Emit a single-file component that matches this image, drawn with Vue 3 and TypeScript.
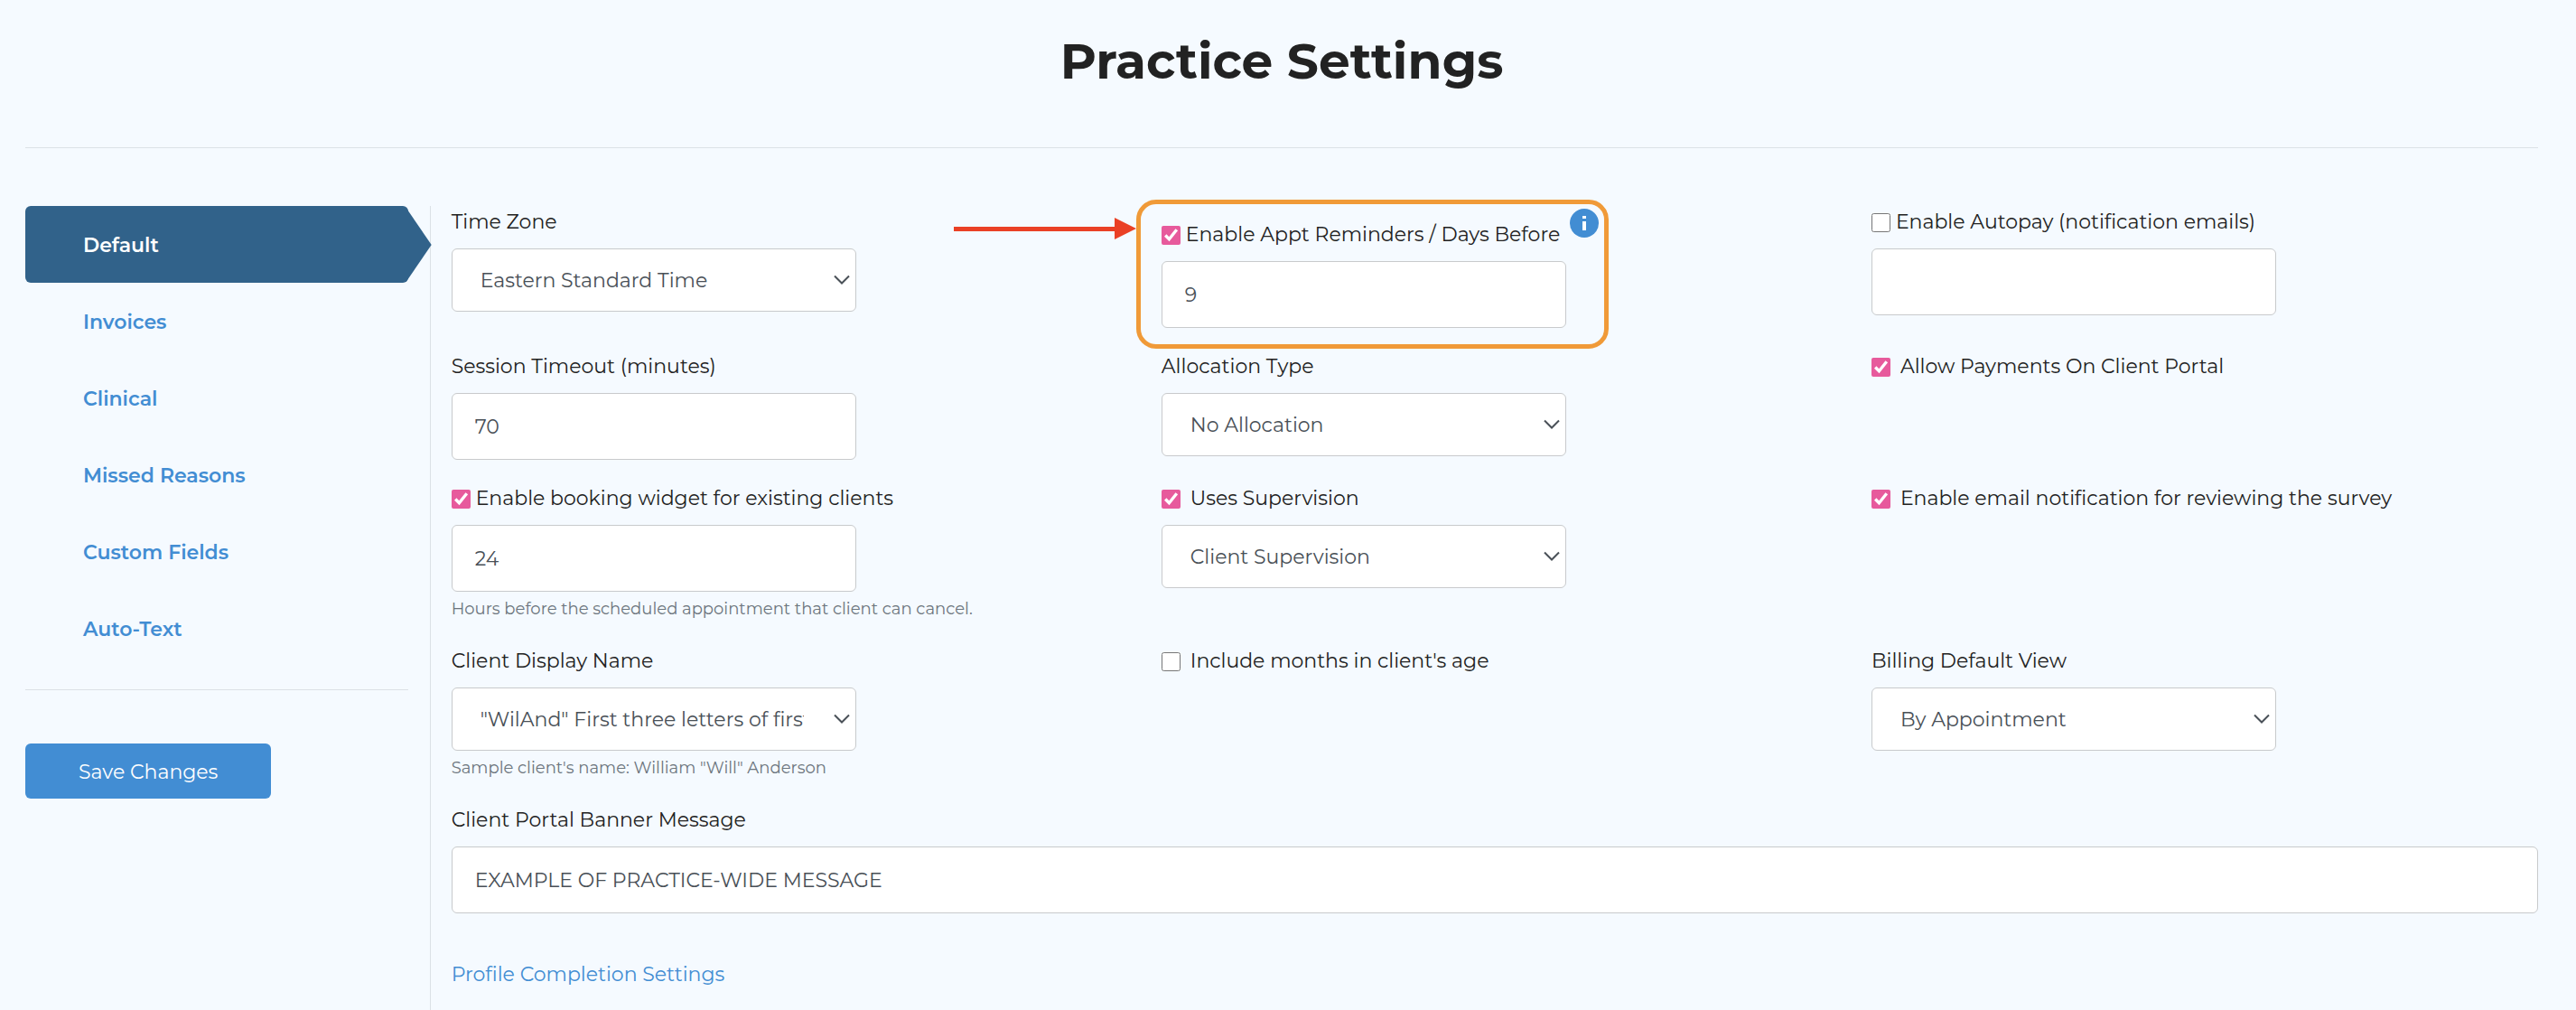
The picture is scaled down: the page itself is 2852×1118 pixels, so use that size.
<script setup lang="ts">
import { reactive, ref } from 'vue'

const tabs: string[] = ['Default', 'Invoices', 'Clinical', 'Missed Reasons', 'Custom Fields', 'Auto-Text']
const activeTab = ref<string>('Default')

const form = reactive({
  timeZone: 'Eastern Standard Time',
  reminders: true,
  reminderDays: '9',
  autopay: false,
  autopayEmails: '',
  timeout: '70',
  allocation: 'No Allocation',
  portalPayments: true,
  booking: true,
  bookingHours: '24',
  supervision: true,
  supervisionType: 'Client Supervision',
  surveyEmails: true,
  displayName: '"WilAnd" First three letters of first and last name',
  ageMonths: false,
  billingView: 'By Appointment',
  banner: 'EXAMPLE OF PRACTICE-WIDE MESSAGE',
})
</script>

<template>
  <div class="page">
    <header class="page-header">
      <h1>Practice Settings</h1>
    </header>

    <div class="layout">
      <aside class="sidebar">
        <nav class="tabs">
          <a
            v-for="tab in tabs"
            :key="tab"
            href="#"
            class="tab"
            :class="{ active: tab === activeTab }"
            @click.prevent="activeTab = tab"
          >{{ tab }}</a>
        </nav>
        <hr class="rule" />
        <button type="button" class="save">Save Changes</button>
      </aside>

      <main class="settings">
        <div class="row">
          <div class="field">
            <label class="label" for="time-zone">Time Zone</label>
            <select id="time-zone" v-model="form.timeZone" class="control select">
              <option>Eastern Standard Time</option>
            </select>
          </div>

          <div class="field highlighted">
            <div class="check tight">
              <input id="reminders" v-model="form.reminders" type="checkbox" />
              <label class="label" for="reminders">Enable Appt Reminders / Days Before</label>
            </div>
            <input v-model="form.reminderDays" type="text" class="control text" aria-label="Days before" />
            <button type="button" class="info" aria-label="About reminders">
              <svg viewBox="0 0 32 32" width="32" height="32">
                <circle cx="16" cy="16" r="16" fill="#428dd3" />
                <rect x="14" y="8" width="4" height="3" fill="#fff" />
                <rect x="14" y="14" width="4" height="10" fill="#fff" />
              </svg>
            </button>
            <span class="outline"></span>
            <svg class="arrow" viewBox="0 0 202 24" width="202" height="24">
              <path d="M0 10H178V0L202 12L178 24V15H0Z" fill="#ea4025" />
            </svg>
          </div>

          <div class="field">
            <div class="check tight">
              <input id="autopay" v-model="form.autopay" type="checkbox" />
              <label class="label" for="autopay">Enable Autopay (notification emails)</label>
            </div>
            <input v-model="form.autopayEmails" type="text" class="control text" aria-label="Notification emails" />
          </div>
        </div>

        <div class="row">
          <div class="field">
            <label class="label" for="timeout">Session Timeout (minutes)</label>
            <input id="timeout" v-model="form.timeout" type="text" class="control text" />
          </div>
          <div class="field">
            <label class="label" for="allocation">Allocation Type</label>
            <select id="allocation" v-model="form.allocation" class="control select">
              <option>No Allocation</option>
            </select>
          </div>
          <div class="field">
            <div class="check">
              <input id="payments" v-model="form.portalPayments" type="checkbox" />
              <label class="label" for="payments">Allow Payments On Client Portal</label>
            </div>
          </div>
        </div>

        <div class="row">
          <div class="field">
            <div class="check tight">
              <input id="booking" v-model="form.booking" type="checkbox" />
              <label class="label" for="booking">Enable booking widget for existing clients</label>
            </div>
            <input v-model="form.bookingHours" type="text" class="control text" aria-label="Hours before" />
            <small class="help">Hours before the scheduled appointment that client can cancel.</small>
          </div>
          <div class="field">
            <div class="check">
              <input id="supervision" v-model="form.supervision" type="checkbox" />
              <label class="label" for="supervision">Uses Supervision</label>
            </div>
            <select v-model="form.supervisionType" class="control select" aria-label="Supervision type">
              <option>Client Supervision</option>
            </select>
          </div>
          <div class="field">
            <div class="check">
              <input id="survey" v-model="form.surveyEmails" type="checkbox" />
              <label class="label" for="survey">Enable email notification for reviewing the survey</label>
            </div>
          </div>
        </div>

        <div class="row">
          <div class="field">
            <label class="label" for="display-name">Client Display Name</label>
            <select id="display-name" v-model="form.displayName" class="control select">
              <option>"WilAnd" First three letters of first and last name</option>
            </select>
            <small class="help">Sample client's name: William "Will" Anderson</small>
          </div>
          <div class="field">
            <div class="check">
              <input id="months" v-model="form.ageMonths" type="checkbox" />
              <label class="label" for="months">Include months in client's age</label>
            </div>
          </div>
          <div class="field">
            <label class="label" for="billing">Billing Default View</label>
            <select id="billing" v-model="form.billingView" class="control select">
              <option>By Appointment</option>
            </select>
          </div>
        </div>

        <div class="field">
          <label class="label" for="banner">Client Portal Banner Message</label>
          <input id="banner" v-model="form.banner" type="text" class="control text wide" />
        </div>

        <a href="#" class="profile-link">Profile Completion Settings</a>
      </main>
    </div>
  </div>
</template>

<style>
body {
  background: #f5faff;
}
</style>

<style scoped>
.page,
.page * {
  box-sizing: border-box;
}

.page {
  display: flex;
  flex-direction: column;
  min-height: 100vh;
  padding: 0 42px 0 28px;
  background: #f5faff;
  color: #222;
  font-family: Montserrat, Inter, "Liberation Sans", sans-serif;
  font-size: 22px;
  line-height: 36px;
}

.page-header {
  padding: 33px 0 61px;
  border-bottom: 1px solid #dbe1e6;
}

h1 {
  margin: 0;
  font-size: 55px;
  line-height: 69px;
  font-weight: 700;
  text-align: center;
}

.layout {
  display: grid;
  grid-template-columns: 1fr 5fr;
  flex: 1;
  margin: 64px -24px 0;
}

.sidebar {
  padding: 0 24px;
}

.tabs {
  display: flex;
  flex-direction: column;
}

.tab {
  position: relative;
  height: 85px;
  padding: 2px 64px 0;
  border-radius: 6px;
  color: #428dd3;
  font-weight: 600;
  line-height: 84px;
  text-decoration: none;
}

.tab.active {
  background: #31628a;
  color: #fff;
}

.tab.active::after {
  content: "";
  position: absolute;
  top: 2px;
  left: 100%;
  width: 28px;
  height: 82px;
  margin-left: -2px;
  background: #31628a;
  clip-path: polygon(0 0, 100% 50%, 0 100%);
}

.rule {
  height: 1px;
  margin: 25px 0 59px;
  border: 0;
  background: #dbe1e6;
}

.save {
  height: 61px;
  padding: 2px 59px 0;
  border: 0;
  border-radius: 6px;
  background: #428dd3;
  color: #fff;
  font: inherit;
}

.settings {
  display: flex;
  flex-direction: column;
  gap: 25px;
  min-width: 0;
  padding: 0 24px 0 23px;
  border-left: 1px solid #dbe1e6;
}

.row {
  display: grid;
  grid-template-columns: repeat(3, minmax(0, 1fr));
  gap: 48px;
  align-items: start;
}

.field {
  display: flex;
  flex-direction: column;
}

.highlighted {
  position: relative;
  max-width: 448px;
  margin-top: 14px;
}

.label {
  white-space: nowrap;
}

.check {
  display: flex;
  align-items: center;
  gap: 11px;
}

.check.tight {
  gap: 6px;
}

.check input {
  flex: none;
  width: 21px;
  height: 21px;
  margin: 1px 0 0;
  accent-color: #e75a9c;
}

.control {
  width: 100%;
  max-width: 448px;
  margin-top: 11px;
  border: 1px solid #c8cacc;
  border-radius: 6px;
  background-color: #fff;
  color: #495057;
  font: inherit;
}

.text {
  height: 74px;
  padding: 0 25px;
}

.select {
  height: 70px;
  padding: 2px 57px 0 31px;
  appearance: none;
  background-image: url("data:image/svg+xml,%3Csvg xmlns='http://www.w3.org/2000/svg' width='18' height='12' viewBox='0 0 18 12'%3E%3Cpath d='M1 1.5L9 9.5L17 1.5' fill='none' stroke='%23495057' stroke-width='2'/%3E%3C/svg%3E");
  background-repeat: no-repeat;
  background-position: right 6px center;
}

.wide {
  max-width: none;
}

.help {
  margin-top: 4px;
  color: #6c757d;
  font-size: 18px;
  line-height: 30px;
}

.info {
  position: absolute;
  top: -11px;
  left: calc(100% + 4px);
  width: 32px;
  height: 32px;
  padding: 0;
  border: 0;
  background: none;
}

.info svg {
  display: block;
}

.outline {
  position: absolute;
  inset: -21px -47px -23px -28px;
  border: 5px solid #f09a38;
  border-radius: 22px;
  pointer-events: none;
}

.arrow {
  position: absolute;
  top: -1px;
  right: calc(100% + 28px);
}

.profile-link {
  align-self: flex-start;
  margin-top: 25px;
  color: #428dd3;
  text-decoration: none;
}
</style>
